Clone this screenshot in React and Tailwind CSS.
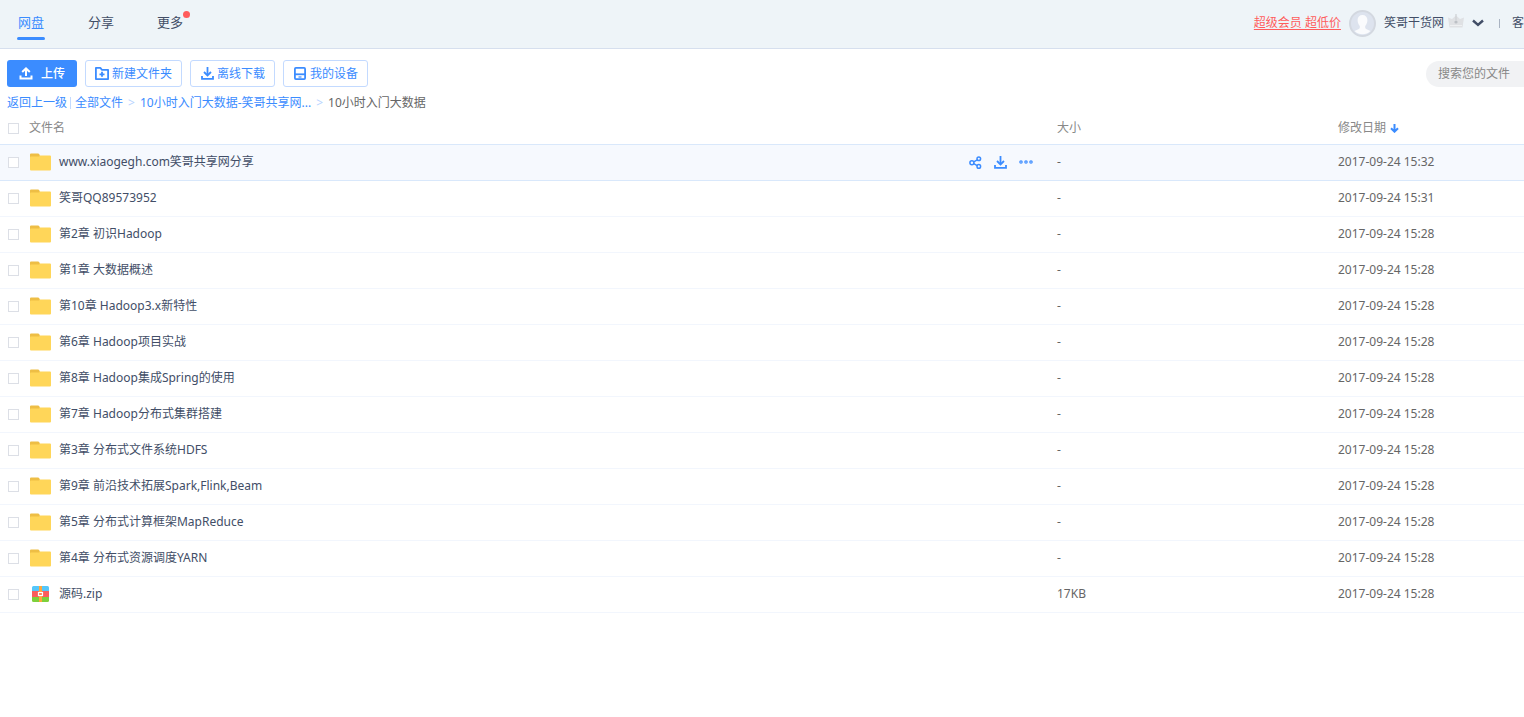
import React, { useState } from "react";

const FILES = [
  { name: "www.xiaogegh.com笑哥共享网分享", size: "-", date: "2017-09-24 15:32", active: true },
  { name: "笑哥QQ89573952", size: "-", date: "2017-09-24 15:31" },
  { name: "第2章 初识Hadoop", size: "-", date: "2017-09-24 15:28" },
  { name: "第1章 大数据概述", size: "-", date: "2017-09-24 15:28" },
  { name: "第10章 Hadoop3.x新特性", size: "-", date: "2017-09-24 15:28" },
  { name: "第6章 Hadoop项目实战", size: "-", date: "2017-09-24 15:28" },
  { name: "第8章 Hadoop集成Spring的使用", size: "-", date: "2017-09-24 15:28" },
  { name: "第7章 Hadoop分布式集群搭建", size: "-", date: "2017-09-24 15:28" },
  { name: "第3章 分布式文件系统HDFS", size: "-", date: "2017-09-24 15:28" },
  { name: "第9章 前沿技术拓展Spark,Flink,Beam", size: "-", date: "2017-09-24 15:28" },
  { name: "第5章 分布式计算框架MapReduce", size: "-", date: "2017-09-24 15:28" },
  { name: "第4章 分布式资源调度YARN", size: "-", date: "2017-09-24 15:28" },
  { name: "源码.zip", size: "17KB", date: "2017-09-24 15:28", zip: true },
];

const UploadIcon = () => (
  <svg width="14" height="13" viewBox="0 0 14 13" fill="none" stroke="currentColor" strokeWidth="2">
    <path d="M7 9V2" />
    <path d="M3.2 5L7 1.4 10.8 5" />
    <path d="M1.5 8.5v3h11v-3" />
  </svg>
);

const DownloadIcon = () => (
  <svg width="13" height="13" viewBox="0 0 13 13" fill="none" stroke="currentColor" strokeWidth="1.8">
    <path d="M6.5 0v8" />
    <path d="M3 5l3.5 3.4L10 5" />
    <path d="M1 9v2.8h11V9" />
  </svg>
);

const NewFolderIcon = () => (
  <svg width="14" height="13" viewBox="0 0 14 13" fill="none" stroke="currentColor" strokeWidth="1.8">
    <path d="M.9 12.1V.9h4.600l1.300 1.900h6.300v9.300z" strokeLinejoin="round" />
    <path d="M7 4.800v5M4.500 7.300h5" />
  </svg>
);

const DeviceIcon = () => (
  <svg width="12" height="13" viewBox="0 0 12 13" fill="none" stroke="currentColor" strokeWidth="1.800">
    <rect x=".9" y=".9" width="10.200" height="11.200" rx="1" />
    <path d="M1 7.300h10" />
    <path d="M4.500 10h3" strokeWidth="1.200" />
  </svg>
);

const ShareIcon = () => (
  <svg width="13" height="13" viewBox="0 0 13 13" fill="none" stroke="currentColor" strokeWidth="1.500">
    <circle cx="2.900" cy="6.700" r="2" />
    <circle cx="9.800" cy="2.700" r="1.800" />
    <circle cx="9.800" cy="10.400" r="1.800" />
    <path d="M4.800 5.800l3.400-2M4.800 7.700l3.400 1.900" />
  </svg>
);

const MoreIcon = () => (
  <svg width="14" height="4" viewBox="0 0 14 4" fill="none" stroke="currentColor" strokeWidth="1.200">
    <circle cx="2" cy="2" r="1.200" />
    <circle cx="7" cy="2" r="1.200" />
    <circle cx="12" cy="2" r="1.200" />
  </svg>
);

const FolderIcon = () => (
  <svg width="21" height="18" viewBox="0 0 21 18">
    <path d="M0 1.500a1 1 0 0 1 1-1h7a1.500 1.500 0 0 1 1.300.8L10 3v3H0z" fill="#eebe45" />
    <path d="M0 4.500a1 1 0 0 1 1-1h8L10 2.500h10a1 1 0 0 1 1 1v13a1 1 0 0 1-1 1H1a1 1 0 0 1-1-1z" fill="#ffd659" />
  </svg>
);

const ZipIcon = () => (
  <svg width="17" height="16" viewBox="0 0 17 16">
    <path d="M1.500 0h14A1.500 1.500 0 0 1 17 1.500V5H0V1.500A1.500 1.500 0 0 1 1.500 0z" fill="#55c7fa" />
    <path d="M0 5h17v6H0z" fill="#fa5d5c" />
    <path d="M0 11h17v3.500a1.500 1.500 0 0 1-1.500 1.500h-14A1.500 1.500 0 0 1 0 14.500z" fill="#7ed03b" />
    <path d="M7 0h3v16H7z" fill="#ffa83c" />
    <rect x="6.500" y="6.500" width="4" height="3" fill="#fa7a4c" stroke="#fff" strokeWidth="1.200" />
  </svg>
);

const Avatar = () => (
  <svg width="27" height="27" viewBox="0 0 27 27">
    <circle cx="13.500" cy="13.500" r="12.500" fill="#dde3ee" stroke="#d3d8e0" strokeWidth="2" />
    <path
      d="M13.500 5c-3 0-4.900 2-4.900 5 0 2.400.8 4.500 2.200 5.900v1.800c0 1-2 1.600-5.300 3.300a11.300 11.300 0 0 0 16 0c-3.300-1.700-5.300-2.300-5.300-3.300v-1.800c1.400-1.400 2.200-3.500 2.200-5.900 0-3-1.900-5-4.900-5z"
      fill="#fafbfd"
    />
  </svg>
);

const Crown = () => (
  <svg width="16" height="14" viewBox="0 0 16 14">
    <path d="M0 3.500l4 1.500 4-3.500L12 5l4-1.500-1.500 10h-13z" fill="#dfe1e4" />
    <path d="M2 11.500h12" stroke="#eef0f2" />
    <path d="M8 0v6" stroke="#cdd0d4" strokeWidth="1.200" />
    <circle cx="8" cy="8" r="1.600" fill="#bcc0c5" />
  </svg>
);

const Checkbox = ({ label, ...props }) => (
  <input
    type="checkbox"
    aria-label={label}
    className="size-[11px] shrink-0 appearance-none border border-[#dcdfe6] bg-white checked:bg-[#3b8cff]"
    {...props}
  />
);

const ToolButton = ({ icon, children }) => (
  <button className="flex h-[27px] items-center gap-[3px] rounded-[3px] border border-[#c3daff] bg-white px-[9px] text-[#3b8cff]">
    <span className="flex w-[14px] justify-center">{icon}</span>
    {children}
  </button>
);

const Header = () => (
  <header className="flex h-[49px] items-center justify-between border-b border-[#d6dfee] bg-[#eef4f8] text-[#424e67]">
    <nav className="flex gap-[43px] pb-1 pl-[17px] text-[13px] leading-5">
      <a href="#disk" className="relative px-px text-[#3b8cff]">
        网盘
        <span className="absolute inset-x-0 top-[25px] h-[3px] rounded-full bg-[#3b8cff]" />
      </a>
      <a href="#share">分享</a>
      <a href="#more" className="relative">
        更多
        <span className="absolute -right-[7px] -top-px size-[7px] rounded-full bg-[#ff5c5c]" />
      </a>
    </nav>
    <div className="flex items-center pb-[2px] leading-5">
      <a href="#vip" className="text-[#ff5c5c] underline underline-offset-2">
        超级会员 超低价
      </a>
      <div className="mx-2">
        <Avatar />
      </div>
      <span>笑哥干货网</span>
      <div className="mb-1 ml-1 mr-2">
        <Crown />
      </div>
      <svg width="12" height="8" viewBox="0 0 12 8" fill="none" stroke="#424e67" strokeWidth="2.400">
        <path d="M1 1.500l5 4.500 5-4.500" />
      </svg>
      <span className="ml-[15px] mr-3 h-[9px] w-px bg-[#a9b3c2]" />
      <a href="#client">客</a>
    </div>
  </header>
);

const FileRow = ({ file, checked, onToggle }) => (
  <tr
    className={
      file.active
        ? "h-9 border-y border-[#d9e8fb] bg-[#f6f9fe]"
        : "h-9 border-b border-[#f2f6fd]"
    }
  >
    <td className="p-0">
      <div className="flex items-center pl-2 pr-6">
        <Checkbox label={file.name} checked={checked} onChange={onToggle} />
        <span className="ml-[11px] mr-2 flex w-[21px] justify-center">
          {file.zip ? <ZipIcon /> : <FolderIcon />}
        </span>
        <a href="#file" className="text-[#424e67]">
          {file.name}
        </a>
        {file.active && (
          <div className="ml-auto flex items-center gap-3 text-[#3b8cff]">
            <button aria-label="分享">
              <ShareIcon />
            </button>
            <button aria-label="下载">
              <DownloadIcon />
            </button>
            <button aria-label="更多">
              <MoreIcon />
            </button>
          </div>
        )}
      </div>
    </td>
    <td className="p-0">{file.size}</td>
    <td className="p-0">{file.date}</td>
  </tr>
);

const App = () => {
  const [selected, setSelected] = useState([]);

  const toggle = (name) =>
    setSelected((prev) =>
      prev.includes(name) ? prev.filter((n) => n !== name) : [...prev, name]
    );

  const allSelected = selected.length === FILES.length;

  return (
    <div className="min-h-screen bg-white font-['Noto_Sans','Noto_Sans_CJK_SC',sans-serif] text-xs leading-[18px] text-[#666]">
      <Header />

      {/* toolbar */}
      <div className="flex items-center justify-between pl-[7px] pt-[11px]">
        <div className="flex gap-2">
          <button className="flex h-[27px] items-center gap-2 rounded-[3px] bg-[#3b8cff] px-3 font-medium text-white">
            <UploadIcon />
            上传
          </button>
          <ToolButton icon={<NewFolderIcon />}>新建文件夹</ToolButton>
          <ToolButton icon={<DownloadIcon />}>离线下载</ToolButton>
          <ToolButton icon={<DeviceIcon />}>我的设备</ToolButton>
        </div>
        <input
          type="text"
          aria-label="搜索您的文件"
          placeholder="搜索您的文件"
          className="h-[26px] w-[98px] rounded-l-full bg-[#f1f2f4] pl-3 placeholder:text-[#888]"
        />
      </div>

      {/* breadcrumb */}
      <div className="flex h-8 items-center pl-[7px] text-[#3b8cff]">
        <a href="#back">返回上一级</a>
        <span className="ml-[3px] mr-1 h-3 w-px bg-[#c3daff]" />
        <a href="#all">全部文件</a>
        <span className="mx-[5px] text-[#b8d4ff]">&gt;</span>
        <a href="#parent">10小时入门大数据-笑哥共享网...</a>
        <span className="mx-[5px] text-[#b8d4ff]">&gt;</span>
        <span className="text-[#666]">10小时入门大数据</span>
      </div>

      <table className="w-full table-fixed border-collapse text-left">
        <colgroup>
          <col />
          <col className="w-[281px]" />
          <col className="w-[186px]" />
        </colgroup>
        <thead className="text-[#888]">
          <tr className="h-[25px] align-top">
            <th className="p-0 font-normal">
              <div className="flex items-center gap-[10px] pl-2">
                <Checkbox
                  label="全选"
                  checked={allSelected}
                  onChange={() => setSelected(allSelected ? [] : FILES.map((f) => f.name))}
                />
                文件名
              </div>
            </th>
            <th className="p-0 font-normal">大小</th>
            <th className="p-0 font-normal">
              <div className="flex items-center gap-1">
                修改日期
                <svg width="9" height="9" viewBox="0 0 9 9" fill="none" stroke="#3b8cff" strokeWidth="2">
                  <path d="M4.500 0v7.500M1 4.200l3.500 3.500L8 4.200" />
                </svg>
              </div>
            </th>
          </tr>
        </thead>
        <tbody>
          {FILES.map((file) => (
            <FileRow
              key={file.name}
              file={file}
              checked={selected.includes(file.name)}
              onToggle={() => toggle(file.name)}
            />
          ))}
        </tbody>
      </table>
    </div>
  );
};

export default App;
